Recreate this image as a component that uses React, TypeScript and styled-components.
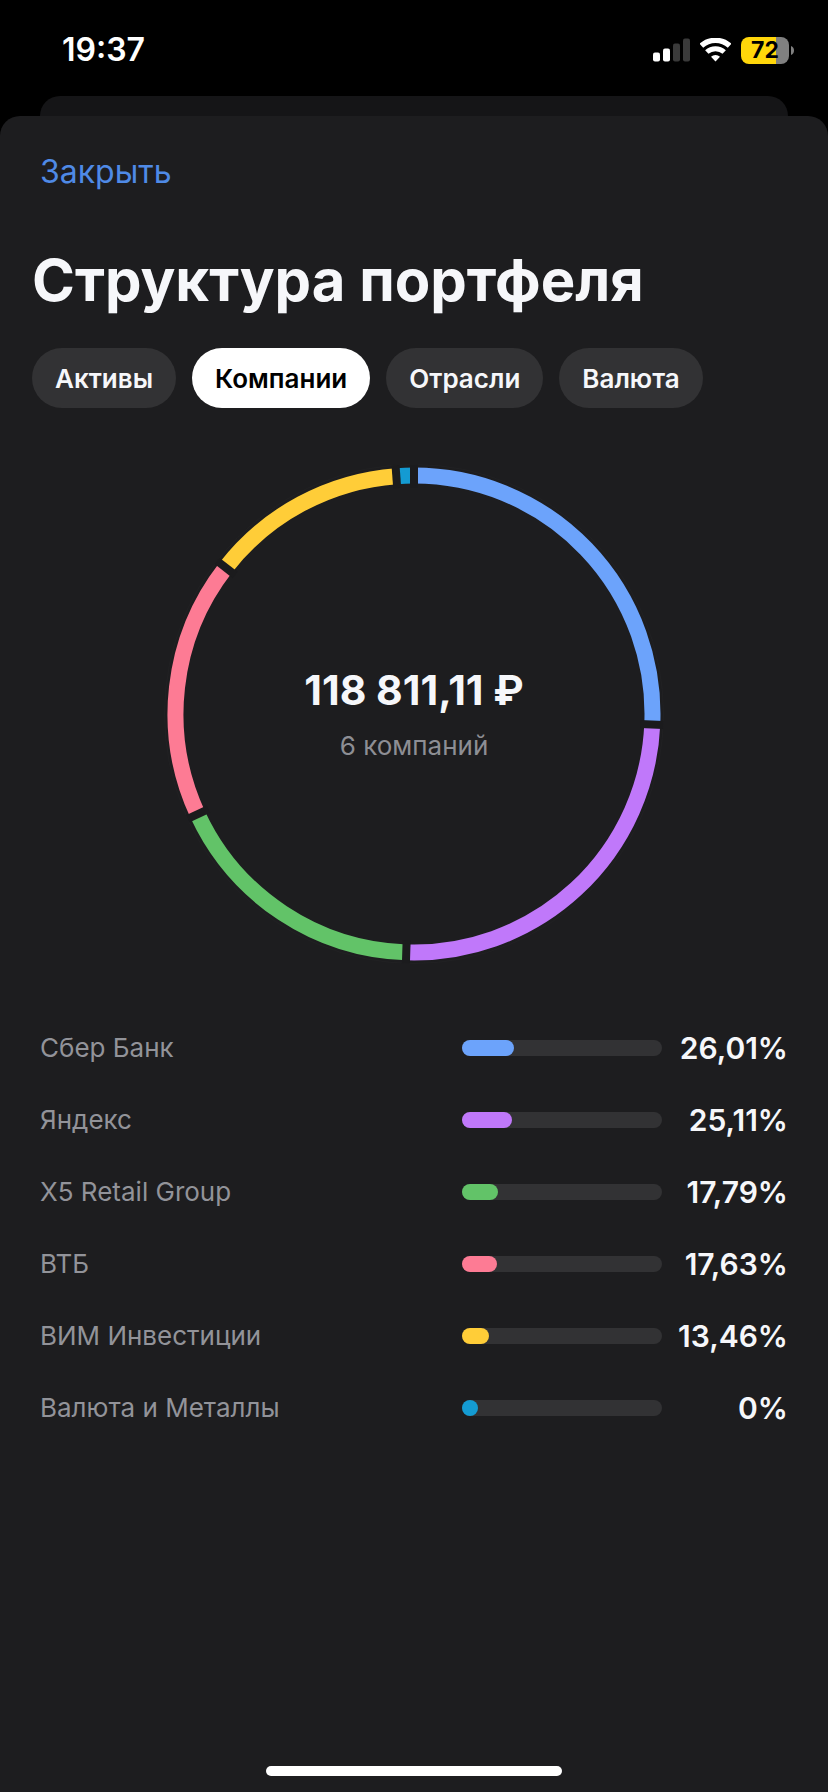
import { useState } from "react";
import styled, { createGlobalStyle } from "styled-components";

interface Company {
  name: string;
  share: number;
  color: string;
}

const companies: Company[] = [
  { name: "Сбер Банк", share: 26.01, color: "#6ca3fb" },
  { name: "Яндекс", share: 25.11, color: "#c078fa" },
  { name: "X5 Retail Group", share: 17.79, color: "#62c368" },
  { name: "ВТБ", share: 17.63, color: "#fd7b94" },
  { name: "ВИМ Инвестиции", share: 13.46, color: "#ffcd38" },
  { name: "Валюта и Металлы", share: 0, color: "#149bd2" },
];

const tabs = ["Активы", "Компании", "Отрасли", "Валюта"];

const GlobalStyle = createGlobalStyle`
  * {
    box-sizing: border-box;
  }

  body {
    margin: 0;
    background: #000000;
    color: #f6f7fa;
    font-family: Inter, "Liberation Sans", sans-serif;
  }

  button {
    border: none;
    font-family: inherit;
    cursor: pointer;
  }
`;

const Screen = styled.div`
  display: flex;
  flex-direction: column;
  min-height: 100vh;
`;

const StatusBar = styled.header`
  display: flex;
  justify-content: space-between;
  align-items: center;
  height: 96px;
  padding: 4px 34px 0 62px;
`;

const Time = styled.time`
  color: #ffffff;
  font-size: 32px;
  font-weight: 600;
  line-height: 40px;
`;

const StatusIcons = styled.div`
  display: flex;
  align-items: center;
  gap: 10px;
`;

const BatteryWrapper = styled.div`
  display: flex;
  align-items: center;
  gap: 2px;
`;

const Battery = styled.div<{ $level: number }>`
  width: 48px;
  height: 27px;
  border-radius: 8px;
  background: linear-gradient(
    to right,
    #ffd60a ${(props) => props.$level}%,
    #808080 ${(props) => props.$level}%
  );
  color: #000000;
  font-size: 23px;
  font-weight: 700;
  line-height: 27px;
  text-align: center;
`;

const BackSheet = styled.div`
  height: 20px;
  margin: 0 40px;
  border-radius: 20px 20px 0 0;
  background: #151517;
`;

const Sheet = styled.main`
  display: flex;
  flex: 1;
  flex-direction: column;
  padding: 36px 0 16px;
  border-radius: 20px 20px 0 0;
  background: #1d1d1f;
`;

const CloseButton = styled.button`
  align-self: flex-start;
  margin-left: 40px;
  padding: 0;
  background: none;
  color: #4f8ae6;
  font-size: 32px;
  line-height: 40px;
`;

const Title = styled.h1`
  margin: 52px 32px 32px;
  font-size: 58px;
  font-weight: 700;
  line-height: 72px;
`;

const TabList = styled.div`
  display: flex;
  flex-wrap: wrap;
  gap: 16px;
  padding: 0 32px;
`;

const Tab = styled.button<{ $active: boolean }>`
  height: 60px;
  padding: 0 23px;
  border-radius: 30px;
  background: ${(props) => (props.$active ? "#ffffff" : "#323234")};
  color: ${(props) => (props.$active ? "#000000" : "#f6f7fa")};
  font-size: 26px;
  font-weight: 600;
`;

const ChartWrapper = styled.section`
  display: grid;
  place-items: center;
  margin: 56px 32px 48px;

  & > * {
    grid-area: 1 / 1;
  }
`;

const ChartSvg = styled.svg`
  width: 100%;
  max-width: 500px;
`;

const Total = styled.div`
  display: flex;
  flex-direction: column;
  align-items: center;
  gap: 16px;
`;

const Amount = styled.strong`
  font-size: 41px;
  font-weight: 700;
  line-height: 48px;
`;

const Caption = styled.span`
  color: #8d8e94;
  font-size: 26px;
  line-height: 32px;
`;

const List = styled.ul`
  margin: 0;
  padding: 0 40px;
  list-style: none;
`;

const Row = styled.li`
  display: grid;
  grid-template-columns: 1fr 200px 126px;
  align-items: center;
  height: 72px;
`;

const Name = styled.span`
  color: #929399;
  font-size: 26px;
  line-height: 32px;
`;

const Track = styled.div`
  height: 16px;
  border-radius: 8px;
  background: #323234;
`;

const Fill = styled.div<{ $color: string }>`
  min-width: 16px;
  height: 16px;
  border-radius: 8px;
  background: ${(props) => props.$color};
`;

const Percent = styled.span`
  font-size: 30px;
  font-weight: 600;
  line-height: 40px;
  text-align: right;
`;

const HomeIndicator = styled.div`
  width: 296px;
  height: 10px;
  margin: auto auto 0;
  border-radius: 5px;
  background: #ffffff;
`;

function SignalIcon() {
  return (
    <svg width="37" height="24" viewBox="0 0 37 24" aria-hidden="true">
      <rect x="0" y="14.5" width="7" height="9" rx="2" fill="#ffffff" />
      <rect x="10" y="10.5" width="7" height="13" rx="2" fill="#ffffff" />
      <rect x="20" y="5.5" width="7" height="18" rx="2" fill="#3a3a3a" />
      <rect x="30" y="0.5" width="7" height="23" rx="2" fill="#3a3a3a" />
    </svg>
  );
}

function WifiIcon() {
  return (
    <svg width="31" height="24" viewBox="0 0 31 24" aria-hidden="true">
      <g fill="none" stroke="#ffffff">
        <path d="M1.4 7.7a21.2 21.2 0 0 1 28.200 0" strokeWidth="5.400" />
        <path d="M6.800 14a13 13 0 0 1 17.400 0" strokeWidth="5" />
      </g>
      <path d="M15.500 23.400l-4.500-4.700a6.600 6.600 0 0 1 9 0z" fill="#ffffff" />
    </svg>
  );
}

const CENTER = 250;
const RADIUS = 238.5;
const MIN_ANGLE = 4.25;
const GAP = 8;

function pointAt(angle: number, radius: number) {
  const rad = ((angle - 90) * Math.PI) / 180;
  return [CENTER + radius * Math.cos(rad), CENTER + radius * Math.sin(rad)];
}

function DonutChart({ items }: { items: Company[] }) {
  // пустые доли всё равно получают минимальный сектор
  const empty = items.filter((item) => item.share === 0).length;
  const available = 360 - empty * MIN_ANGLE;

  let angle = 0;
  const sectors = items.map((item) => {
    const start = angle;
    angle += item.share === 0 ? MIN_ANGLE : (item.share / 100) * available;
    return { ...item, start, end: angle };
  });

  return (
    <ChartSvg viewBox="0 0 500 500" role="img" aria-label="Доли компаний">
      <circle cx={CENTER} cy={CENTER} r="249.5" fill="none" stroke="#212123" />
      {sectors.map(({ name, color, start, end }) => {
        const [x1, y1] = pointAt(start, RADIUS);
        const [x2, y2] = pointAt(end, RADIUS);
        return (
          <path
            key={name}
            d={`M${x1} ${y1}A${RADIUS} ${RADIUS} 0 0 1 ${x2} ${y2}`}
            fill="none"
            stroke={color}
            strokeWidth="16"
          />
        );
      })}
      {sectors.map(({ name, start }) => {
        const [x1, y1] = pointAt(start, RADIUS - 12);
        const [x2, y2] = pointAt(start, RADIUS + 11);
        return (
          <line
            key={name}
            x1={x1}
            y1={y1}
            x2={x2}
            y2={y2}
            stroke="#1b1b1d"
            strokeWidth={GAP}
          />
        );
      })}
    </ChartSvg>
  );
}

function App() {
  const [activeTab, setActiveTab] = useState("Компании");

  const formatShare = (share: number) => `${share.toString().replace(".", ",")}%`;

  return (
    <>
      <GlobalStyle />
      <Screen>
        <StatusBar>
          <Time>19:37</Time>
          <StatusIcons>
            <SignalIcon />
            <WifiIcon />
            <BatteryWrapper>
              <Battery $level={73}>72</Battery>
              <svg width="3" height="9" viewBox="0 0 3 9" aria-hidden="true">
                <path d="M0 0c2 .8 3 2.4 3 4.5s-1 3.7-3 4.5z" fill="#808080" />
              </svg>
            </BatteryWrapper>
          </StatusIcons>
        </StatusBar>
        <BackSheet />
        <Sheet>
          <CloseButton type="button">Закрыть</CloseButton>
          <Title>Структура портфеля</Title>
          <TabList role="tablist">
            {tabs.map((tab) => (
              <Tab
                key={tab}
                type="button"
                role="tab"
                aria-selected={tab === activeTab}
                $active={tab === activeTab}
                onClick={() => setActiveTab(tab)}
              >
                {tab}
              </Tab>
            ))}
          </TabList>
          <ChartWrapper>
            <DonutChart items={companies} />
            <Total>
              <Amount>118 811,11 ₽</Amount>
              <Caption>6 компаний</Caption>
            </Total>
          </ChartWrapper>
          <List>
            {companies.map((company) => (
              <Row key={company.name}>
                <Name>{company.name}</Name>
                <Track>
                  <Fill $color={company.color} style={{ width: `${company.share}%` }} />
                </Track>
                <Percent>{formatShare(company.share)}</Percent>
              </Row>
            ))}
          </List>
          <HomeIndicator />
        </Sheet>
      </Screen>
    </>
  );
}

export default App;
